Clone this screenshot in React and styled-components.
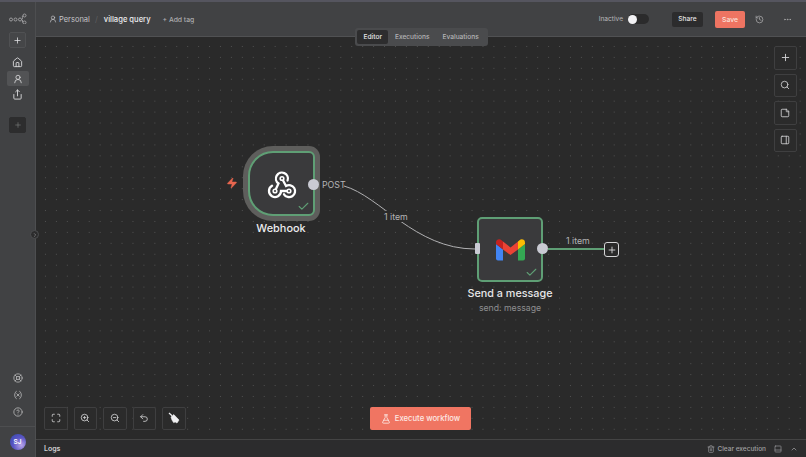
import React from "react";
import styled, { createGlobalStyle } from "styled-components";
import {
  Plus,
  House,
  UserRound,
  Share,
  LifeBuoy,
  Variable,
  CircleHelp,
  Search,
  ZoomIn,
  ZoomOut,
  Maximize,
  Undo2,
  StickyNote,
  PanelRight,
  History,
  Ellipsis,
  FlaskConical,
  Trash2,
  ChevronUp,
  ChevronRight,
  Check,
  Zap,
  PanelBottom,
} from "lucide-react";

const GlobalStyle = createGlobalStyle`
  html, body { margin: 0; padding: 0; height: 100%; background: #2a2a2a; }
  * { box-sizing: border-box; }
  body { font-family: Inter, "Liberation Sans", sans-serif; overflow: hidden; }
`;

const Page = styled.div`
  width: 806px;
  height: 457px;
  display: grid;
  grid-template-columns: 36px 1fr;
  border-top: 2px solid #55555f;
`;

const Sidebar = styled.nav`
  position: relative;
  z-index: 3;
  background: #414244;
  border-right: 1px solid #4d4e50;
  display: flex;
  flex-direction: column;
  align-items: center;
  padding-top: 11px;
  color: #d8d8da;
`;

const CollapseToggle = styled.div`
  position: absolute;
  right: -4px;
  top: 228px;
  width: 9px;
  height: 9px;
  border-radius: 50%;
  background: #2c2c2d;
  border: 1px solid #4d4e50;
  color: #a9a9ab;
  display: flex;
  align-items: center;
  justify-content: center;
`;

const Logo = styled.svg`
  width: 18px;
  height: 11px;
  margin-bottom: 8px;
`;

const SideSquare = styled.button`
  width: 17px;
  height: 16px;
  padding: 0;
  display: flex;
  align-items: center;
  justify-content: center;
  border-radius: 2px;
  border: 1px solid ${(p) => (p.$dark ? "#2d2d2e" : "#505153")};
  background: ${(p) => (p.$dark ? "#2d2d2e" : "#454648")};
  color: ${(p) => (p.$dark ? "#77787a" : "#e6e6e8")};
`;

const SideItem = styled.div`
  width: 22px;
  height: 15px;
  display: flex;
  align-items: center;
  justify-content: center;
  border-radius: 2px;
  margin-top: ${(p) => p.$gap || 1}px;
  background: ${(p) => (p.$active ? "#525355" : "transparent")};
`;

const SideGap = styled.div`
  flex: 1;
`;

const AvatarRow = styled.div`
  align-self: stretch;
  height: 31px;
  margin-top: 7px;
  border-top: 1px solid #4d4e50;
  display: flex;
  align-items: center;
  justify-content: center;
`;

const Avatar = styled.div`
  width: 16px;
  height: 16px;
  border-radius: 50%;
  background: radial-gradient(circle at 70% 70%, #b9a6e8 0%, #5a55c4 50%, #2f47a8 100%);
  color: #fff;
  font-size: 6.5px;
  font-weight: 600;
  display: flex;
  align-items: center;
  justify-content: center;
`;

const Main = styled.div`
  display: flex;
  flex-direction: column;
  min-width: 0;
`;

const Header = styled.header`
  position: relative;
  height: 35px;
  flex: none;
  background: #414244;
  border-bottom: 1px solid #505153;
  display: flex;
  align-items: center;
  padding: 0 14px 0 13px;
  color: #c9c9cb;
`;

const Crumb = styled.span`
  font-size: 7.5px;
  color: #c4c4c6;
  margin-left: 2px;
`;

const Slash = styled.span`
  font-size: 8px;
  color: #5c5d5f;
  margin: 0 6px 0 5px;
`;

const Title = styled.span`
  font-size: 7.6px;
  font-weight: 500;
  color: #ececee;
`;

const AddTag = styled.span`
  font-size: 6.8px;
  font-weight: 500;
  color: #adadaf;
  margin-left: 12px;
`;

const HeaderGap = styled.div`
  flex: 1;
`;

const StatusLabel = styled.span`
  font-size: 6.6px;
  color: #b8b8ba;
  margin-right: 5px;
`;

const Toggle = styled.div`
  width: 21px;
  height: 10px;
  border-radius: 5px;
  background: #2b2b2c;
  display: flex;
  align-items: center;
`;

const Knob = styled.div`
  width: 9px;
  height: 9px;
  border-radius: 50%;
  background: #f2f2f5;
`;

const ShareButton = styled.button`
  width: 31px;
  height: 15px;
  margin-left: 23px;
  border: 0;
  padding: 0;
  border-radius: 2px;
  background: #2c2c2d;
  color: #e4e4e6;
  font: 500 6.6px Inter, sans-serif;
`;

const SaveButton = styled.button`
  width: 30px;
  height: 17px;
  margin-left: 12px;
  border: 0;
  padding: 0;
  border-radius: 2px;
  background: #ee7462;
  color: #fbe3de;
  font: 500 6.8px Inter, sans-serif;
`;

const HeaderIcon = styled.div`
  display: flex;
  color: #a9a9ab;
  margin-left: ${(p) => p.$gap}px;
`;

const Tabs = styled.div`
  position: absolute;
  left: 319px;
  top: 26px;
  width: 133px;
  height: 18px;
  z-index: 2;
  background: #4a4b4d;
  border-radius: 3px;
  display: flex;
  align-items: center;
  padding: 0 2px;
`;

const Tab = styled.div`
  height: 14px;
  padding: 0 6.5px;
  display: flex;
  align-items: center;
  border-radius: 2px;
  font-size: 6.6px;
  font-weight: 500;
  background: ${(p) => (p.$active ? "#2d2d2e" : "transparent")};
  color: ${(p) => (p.$active ? "#e6e6e8" : "#b4b4b6")};
`;

const Canvas = styled.main`
  position: relative;
  flex: 1;
  background-color: #2a2a2a;
  background-image: radial-gradient(circle, #505050 0.6px, transparent 0.8px);
  background-size: 10.95px 10.95px;
  background-position: 4px 4px;
  overflow: hidden;
`;

const Wires = styled.svg`
  position: absolute;
  left: 0;
  top: 0;
  width: 770px;
  height: 400px;
`;

const WebhookNode = styled.div`
  position: absolute;
  left: 212px;
  top: 114px;
  width: 67px;
  height: 65px;
  border: 2px solid #5f9f75;
  border-radius: 25px 6px 6px 25px;
  background: #3a3a3c;
  box-shadow: 0 0 0 5px #5e5e5c;
  display: flex;
  align-items: center;
  justify-content: center;
  color: #fff;
`;

const GmailNode = styled.div`
  position: absolute;
  left: 441px;
  top: 180px;
  width: 66px;
  height: 65px;
  border: 2px solid #5f9f75;
  border-radius: 5px;
  background: #3a3a3c;
  display: flex;
  align-items: center;
  justify-content: center;
`;

const Tick = styled.div`
  position: absolute;
  right: 3px;
  bottom: 1px;
  display: flex;
  color: #5f9f75;
`;

const Port = styled.div`
  position: absolute;
  left: ${(p) => p.$x}px;
  top: ${(p) => p.$y}px;
  width: 11px;
  height: 11px;
  border-radius: 50%;
  background: #c9cad3;
`;

const InputPort = styled.div`
  position: absolute;
  left: 439px;
  top: 206px;
  width: 5px;
  height: 11px;
  border-radius: 1px;
  background: #c9cad3;
  z-index: 1;
`;

const NodeLabel = styled.div`
  position: absolute;
  left: ${(p) => p.$x}px;
  top: ${(p) => p.$y}px;
  width: 140px;
  margin-left: -70px;
  text-align: center;
  font-size: ${(p) => p.$size}px;
  font-weight: ${(p) => p.$weight || 500};
  color: ${(p) => p.$color};
  line-height: 14px;
`;

const EdgeLabel = styled.div`
  position: absolute;
  left: ${(p) => p.$x}px;
  top: ${(p) => p.$y}px;
  font-size: 8.8px;
  line-height: 11px;
  color: #b4b4b6;
  background: ${(p) => (p.$cover ? "#2a2a2a" : "transparent")};
`;

const Bolt = styled.div`
  position: absolute;
  left: 190px;
  top: 140px;
  display: flex;
  color: #e8664f;
`;

const AddNode = styled.div`
  position: absolute;
  left: 568px;
  top: 205px;
  width: 15px;
  height: 15px;
  border: 1.5px solid #d4d4d6;
  border-radius: 3px;
  background: #2a2a2a;
  color: #e4e4e6;
  display: flex;
  align-items: center;
  justify-content: center;
`;

const RightTools = styled.div`
  position: absolute;
  right: 9px;
  top: 9px;
  display: flex;
  flex-direction: column;
  gap: 4px;
`;

const BottomTools = styled.div`
  position: absolute;
  left: 8px;
  bottom: 9px;
  display: flex;
  gap: 6px;
`;

const ToolButton = styled.button`
  width: 23.5px;
  height: 23.5px;
  padding: 0;
  border: 1px solid #3f3f40;
  border-radius: 2px;
  background: #2b2b2b;
  color: #d2d2d4;
  display: flex;
  align-items: center;
  justify-content: center;
`;

const ExecuteButton = styled.button`
  position: absolute;
  left: 334px;
  bottom: 9px;
  width: 101px;
  height: 23px;
  border: 0;
  padding: 0;
  border-radius: 2px;
  background: #f07562;
  color: #fde9e5;
  font: 500 7.7px Inter, sans-serif;
  display: flex;
  align-items: center;
  justify-content: center;
  gap: 4px;
`;

const LogsBar = styled.footer`
  height: 18px;
  flex: none;
  background: #2c2c2d;
  border-top: 1px solid #444;
  display: flex;
  align-items: center;
  padding: 0 8px;
  color: #9c9c9e;
`;

const LogsTitle = styled.span`
  font-size: 7px;
  font-weight: 600;
  color: #cfcfd1;
  flex: 1;
`;

const ClearText = styled.span`
  font-size: 6.5px;
  font-weight: 500;
  color: #a0a0a2;
  margin: 0 8px 0 2px;
`;

const GmailIcon = () => (
  <svg width="29" height="22" viewBox="0 0 29 22">
    <path d="M0 5 L0 19.5 Q0 21.5 2 21.5 L7 21.5 L7 10.5 Z" fill="#4285f4" />
    <path d="M22 10.5 L22 21.5 L27 21.5 Q29 21.5 29 19.5 L29 5 Z" fill="#34a853" />
    <path d="M7 10.5 L14.5 16 L22 10.5 L22 2.5 L14.5 8.5 L7 2.5 Z" fill="#ea4335" />
    <path d="M22 2.5 L22 10.5 L29 5 L29 3.5 C29 0.5 25.5 -0.5 23.5 1.2 Z" fill="#fbbc04" />
    <path d="M0 5 L7 10.5 L7 2.5 L5.5 1.2 C3.5 -0.5 0 0.5 0 3.5 Z" fill="#c5221f" />
  </svg>
);

const WebhookIcon = () => (
  <svg width="34" height="31" viewBox="2 1 34 31" fill="none" stroke="#fff" strokeWidth="2.3" strokeLinecap="round">
    <path d="M12 24 L15.5 16.5 A6 6 0 1 1 24.6 13.5" />
    <path d="M19 11.5 L23 19 A6 6 0 1 1 21 27.3" />
    <path d="M26 24 H18 A6 6 0 1 1 9 18.8" />
    <circle cx="19" cy="11.5" r="1.8" fill="#3a3a3c" strokeWidth="1.6" />
    <circle cx="12" cy="24" r="1.8" fill="#3a3a3c" strokeWidth="1.6" />
    <circle cx="26" cy="24" r="1.8" fill="#3a3a3c" strokeWidth="1.6" />
  </svg>
);

const BroomIcon = () => (
  <svg width="12" height="12" viewBox="0 0 12 12" fill="#f0f0f2" stroke="#f0f0f2" strokeWidth="0.6" strokeLinejoin="round">
    <path d="M1 1 L4 3.8" strokeWidth="1.2" />
    <path d="M3 5 L5.8 2.6 L11 8 L9 11 L7.2 10 L5.6 10.6 Q3.6 8 3 5 Z" />
  </svg>
);

const App = () => (
  <>
    <GlobalStyle />
    <Page>
      <Sidebar>
        <Logo viewBox="0 0 36 22" fill="none" stroke="#9d9d9f" strokeWidth="2">
          <circle cx="4" cy="13" r="3" />
          <circle cx="13" cy="13" r="3" />
          <circle cx="22" cy="13" r="3" />
          <circle cx="31" cy="5" r="3" />
          <circle cx="31" cy="19" r="3" />
          <path d="M25 13 C29 13 25 5 28 5 M25 13 C29 13 25 19 28 19" />
        </Logo>
        <SideSquare>
          <Plus size={9} />
        </SideSquare>
        <SideItem $gap={7}>
          <House size={11} />
        </SideItem>
        <SideItem $active $gap={1}>
          <UserRound size={10} />
        </SideItem>
        <SideItem $gap={1}>
          <Share size={11} />
        </SideItem>
        <SideItem $gap={15}>
          <SideSquare $dark>
            <Plus size={8} />
          </SideSquare>
        </SideItem>
        <SideGap />
        <SideItem>
          <LifeBuoy size={10} color="#b4b4b6" />
        </SideItem>
        <SideItem $gap={2}>
          <Variable size={10} color="#b4b4b6" />
        </SideItem>
        <SideItem $gap={2}>
          <CircleHelp size={10} color="#b4b4b6" />
        </SideItem>
        <AvatarRow>
          <Avatar>SJ</Avatar>
        </AvatarRow>
        <CollapseToggle>
          <ChevronRight size={6} />
        </CollapseToggle>
      </Sidebar>
      <Main>
        <Header>
          <UserRound size={8} />
          <Crumb>Personal</Crumb>
          <Slash>/</Slash>
          <Title>village query</Title>
          <AddTag>+ Add tag</AddTag>
          <HeaderGap />
          <StatusLabel>Inactive</StatusLabel>
          <Toggle>
            <Knob />
          </Toggle>
          <ShareButton>Share</ShareButton>
          <SaveButton>Save</SaveButton>
          <HeaderIcon $gap={10}>
            <History size={9} />
          </HeaderIcon>
          <HeaderIcon $gap={19}>
            <Ellipsis size={9} />
          </HeaderIcon>
          <Tabs>
            <Tab $active>Editor</Tab>
            <Tab>Executions</Tab>
            <Tab>Evaluations</Tab>
          </Tabs>
        </Header>
        <Canvas>
          <Wires viewBox="0 0 770 400" fill="none">
            <path d="M308 149 C 344 159, 379 212, 439 212" stroke="#b0b0b2" strokeWidth="1" />
            <path d="M512 212 L568 212" stroke="#5f9f75" strokeWidth="2" />
          </Wires>
          <Bolt>
            <Zap size={12} fill="currentColor" strokeWidth={1} />
          </Bolt>
          <WebhookNode>
            <WebhookIcon />
            <Tick>
              <Check size={13} />
            </Tick>
          </WebhookNode>
          <Port $x={272} $y={142} />
          <EdgeLabel $x={286} $y={142}>POST</EdgeLabel>
          <NodeLabel $x={245} $y={184} $size={10.9} $color="#ececee">Webhook</NodeLabel>
          <EdgeLabel $x={348} $y={174} $cover>1 item</EdgeLabel>
          <InputPort />
          <GmailNode>
            <GmailIcon />
            <Tick>
              <Check size={13} />
            </Tick>
          </GmailNode>
          <Port $x={501} $y={206} />
          <EdgeLabel $x={530} $y={198}>1 item</EdgeLabel>
          <AddNode>
            <Plus size={10} />
          </AddNode>
          <NodeLabel $x={474} $y={250} $size={10.8} $color="#e6e6e8">Send a message</NodeLabel>
          <NodeLabel $x={474} $y={264} $size={8.7} $weight={400} $color="#8e8e90">send: message</NodeLabel>
          <RightTools>
            <ToolButton>
              <Plus size={11} />
            </ToolButton>
            <ToolButton>
              <Search size={10} />
            </ToolButton>
            <ToolButton>
              <StickyNote size={10} />
            </ToolButton>
            <ToolButton>
              <PanelRight size={10} />
            </ToolButton>
          </RightTools>
          <BottomTools>
            <ToolButton>
              <Maximize size={10} />
            </ToolButton>
            <ToolButton>
              <ZoomIn size={10} />
            </ToolButton>
            <ToolButton>
              <ZoomOut size={10} />
            </ToolButton>
            <ToolButton>
              <Undo2 size={10} />
            </ToolButton>
            <ToolButton>
              <BroomIcon />
            </ToolButton>
          </BottomTools>
          <ExecuteButton>
            <FlaskConical size={10} />
            Execute workflow
          </ExecuteButton>
        </Canvas>
        <LogsBar>
          <LogsTitle>Logs</LogsTitle>
          <Trash2 size={8} />
          <ClearText>Clear execution</ClearText>
          <PanelBottom size={8} />
          <HeaderIcon $gap={8}>
            <ChevronUp size={8} />
          </HeaderIcon>
        </LogsBar>
      </Main>
    </Page>
  </>
);

export default App;
